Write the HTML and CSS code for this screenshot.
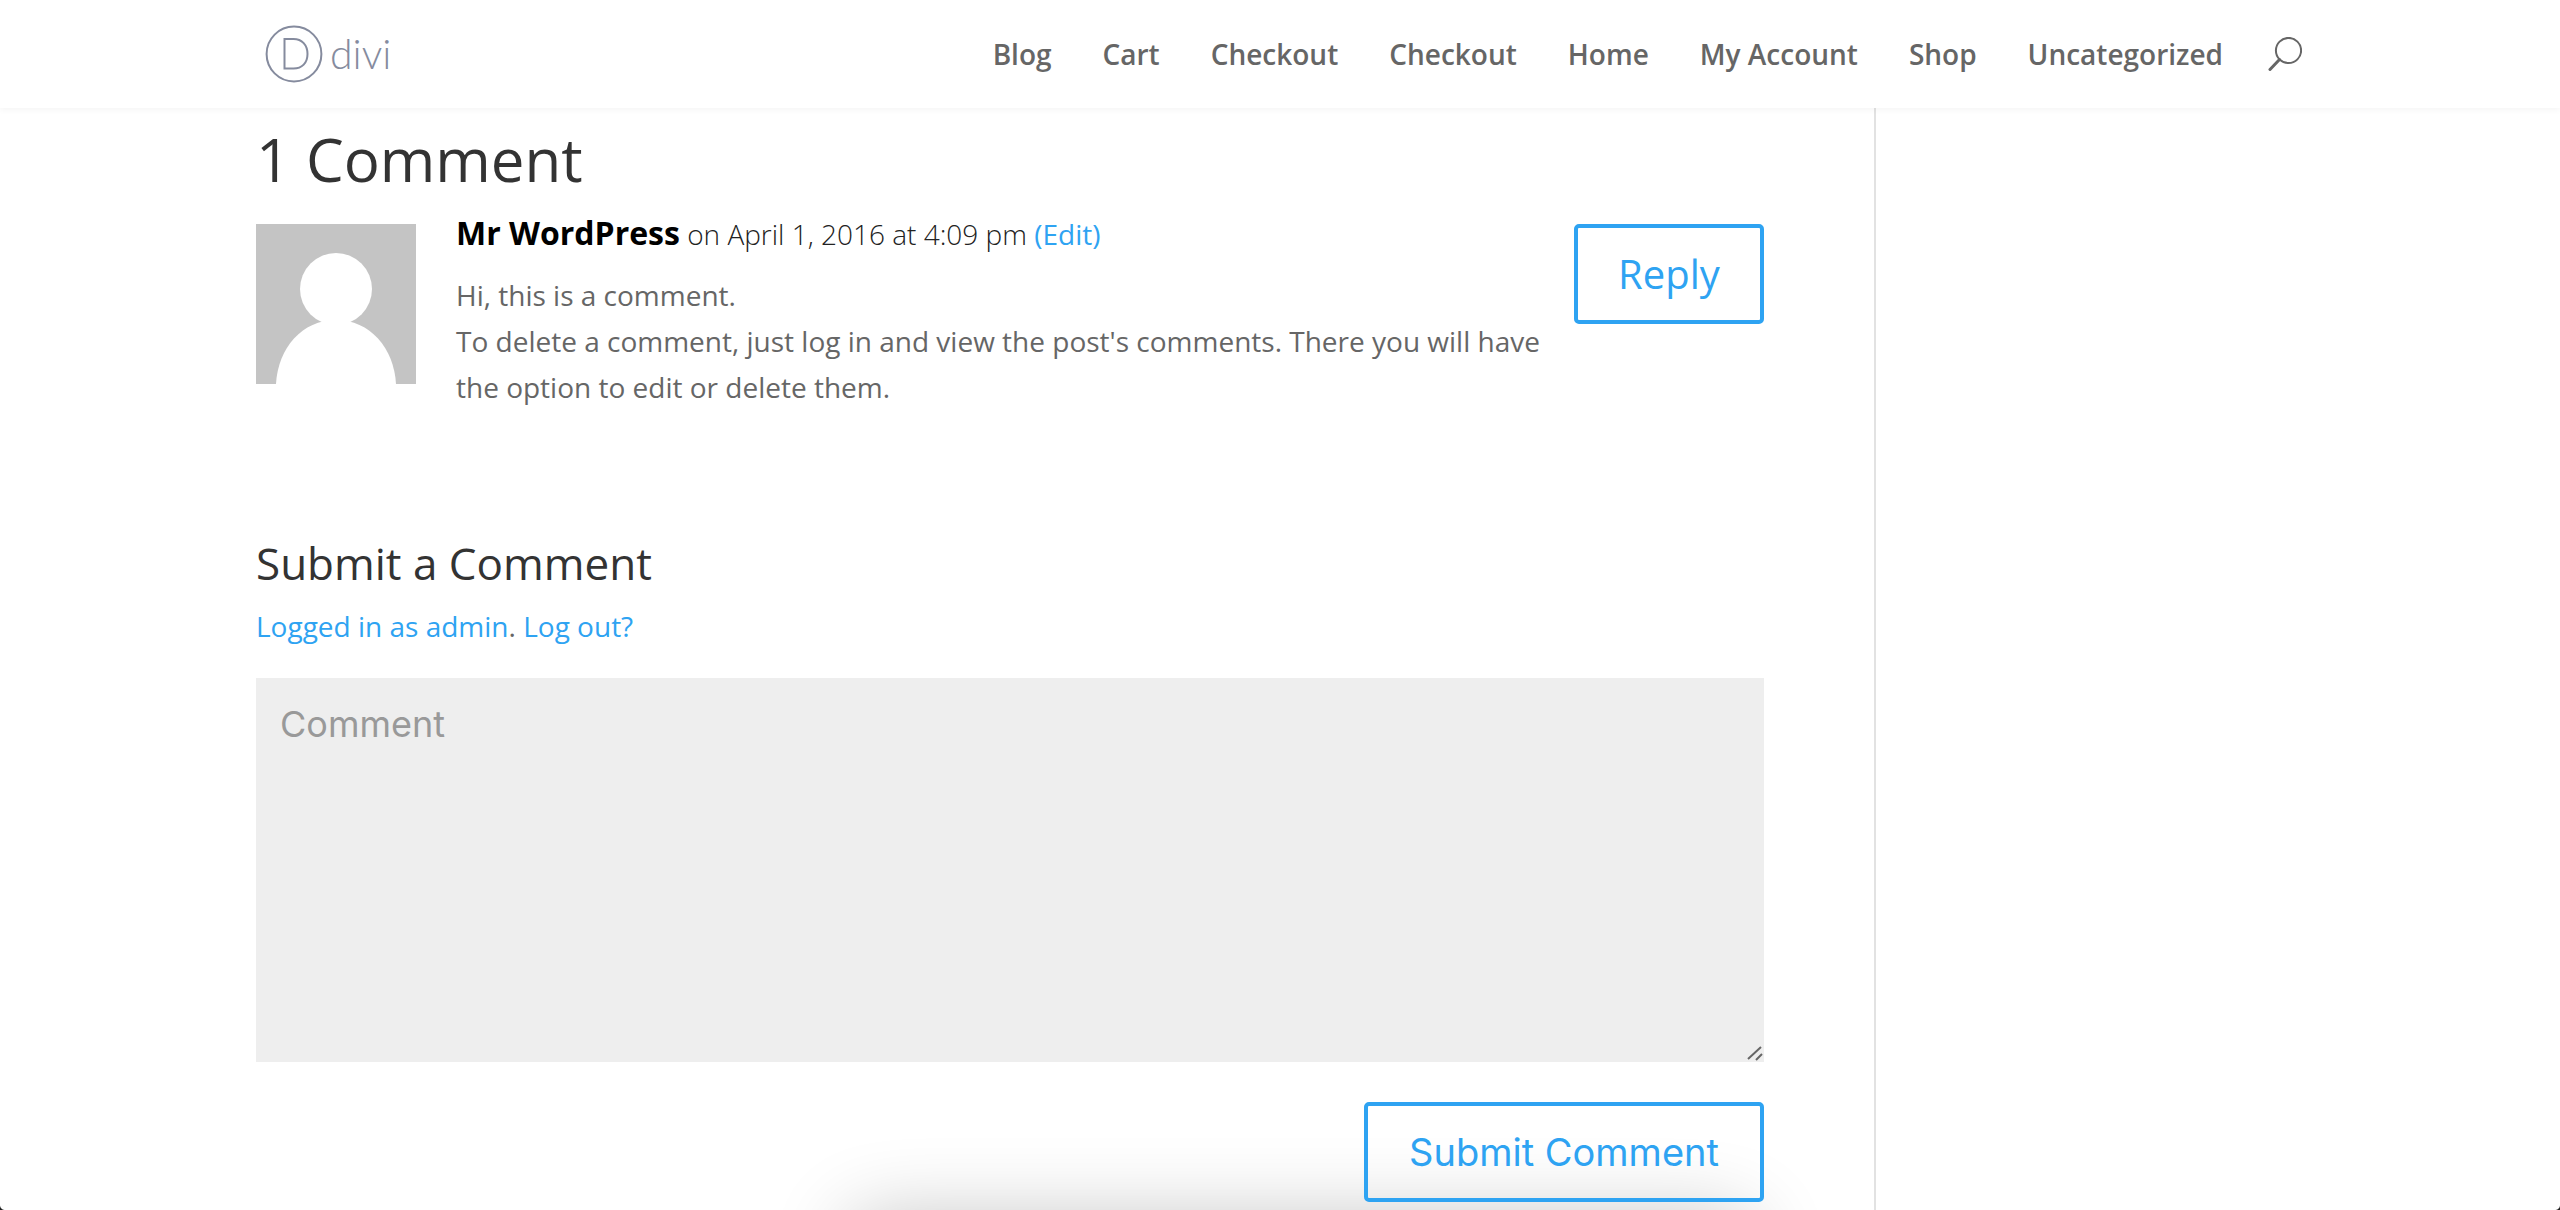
FILE: index.html
```html
<!DOCTYPE html>
<html lang="en">
<head>
<meta charset="utf-8">
<title>Divi</title>
<link rel="stylesheet" href="styles.css">
</head>
<body>
<header class="site-header">
  <a class="logo" href="#">
    <svg class="logo-mark" viewBox="0 0 58 58" width="58" height="58" fill="none" stroke="#858b9e" stroke-width="2">
      <circle cx="29" cy="29" r="27.4"/>
      <path d="M19.5 14h9c8.500 0 14 6 14 15s-5.500 14.500-14 14.500h-9z"/>
    </svg>
    <span class="logo-text">divi</span>
  </a>
  <nav class="nav">
    <a href="#">Blog</a>
    <a href="#">Cart</a>
    <a href="#">Checkout</a>
    <a href="#">Checkout</a>
    <a href="#">Home</a>
    <a href="#">My Account</a>
    <a href="#">Shop</a>
    <a href="#">Uncategorized</a>
  </nav>
  <svg class="search" viewBox="0 0 34 34" width="34" height="34" fill="none" stroke="#666" stroke-width="2">
    <circle cx="20.5" cy="13.5" r="12.6"/>
    <path d="M11.5 22.5L2 32.5" stroke-width="3" stroke-linecap="round"/>
  </svg>
</header>
<div class="page">
  <div class="bottom-shadow"></div>
  <main class="content">
    <h1 class="comments-title">1 Comment</h1>
    <article class="comment">
      <svg class="avatar" viewBox="0 0 160 160" width="160" height="160">
        <rect width="160" height="160" fill="#c4c4c4"/>
        <ellipse cx="80" cy="65" rx="36" ry="36" fill="#fff"/>
        <path d="M20 160C22 124 46 96 80 96s58 28 60 64z" fill="#fff"/>
      </svg>
      <div class="comment-body">
        <p class="comment-meta"><strong class="author">Mr WordPress</strong> on April 1, 2016 at 4:09 pm <a class="edit" href="#">(Edit)</a></p>
        <p class="comment-text">Hi, this is a comment.<br>To delete a comment, just log in and view the post's comments. There you will have the option to edit or delete them.</p>
      </div>
      <a class="btn btn-reply" href="#">Reply</a>
    </article>
    <section class="respond">
      <h3 class="respond-title">Submit a Comment</h3>
      <p class="logged-in"><a href="#">Logged in as admin</a>. <a href="#">Log out?</a></p>
      <div class="input-wrap">
        <textarea class="comment-input" placeholder="Comment"></textarea>
        <svg class="grip" viewBox="0 0 18 18" width="18" height="18" stroke="#666" stroke-width="2" fill="none">
          <path d="M2 15L15 3M10 16l6-6"/>
        </svg>
      </div>
      <div class="submit-row"><button class="btn btn-submit" type="button">Submit Comment</button></div>
    </section>
  </main>
</div>
</body>
</html>
```
FILE: styles.css
```css
* { box-sizing: border-box; }
html, body { margin: 0; height: 1210px; overflow: hidden; background: #fff; }
body { font-family: "Open Sans", sans-serif; color: #666; position: relative; }
body::before, body::after {
  content: "";
  position: absolute;
  bottom: 0;
  width: 5px;
  height: 5px;
  z-index: 3;
}
body::before { left: 0; background: radial-gradient(circle at top right, transparent 4.5px, #222 5.5px); }
body::after { right: 0; background: radial-gradient(circle at top left, transparent 4.5px, #222 5.5px); }
a { color: #2ea3f2; text-decoration: none; }
p, h1, h3 { margin: 0; }

.site-header {
  height: 108px;
  display: flex;
  align-items: center;
  padding: 0 258px 0 265px;
  background: #fff;
  box-shadow: 0 2px 6px rgba(0, 0, 0, .045);
  position: relative;
  z-index: 2;
}
.logo { display: flex; align-items: center; gap: 7px; }
.logo-mark { display: block; }
.logo-text { font-family: "Lato", sans-serif; font-weight: 300; font-size: 41px; line-height: 58px; color: #858b9e; }
.nav { display: flex; gap: 51px; margin-left: auto; }
.nav a { font-size: 28px; font-weight: 600; color: #666; line-height: 40px; }
.search { margin-left: 45px; }

.page { position: relative; height: 1102px; overflow: hidden; }
.bottom-shadow {
  position: absolute;
  left: 850px;
  width: 900px;
  top: 1110px;
  height: 80px;
  box-shadow: 0 0 80px rgba(0, 0, 0, .24);
  border-radius: 20px;
}
.content {
  position: relative;
  width: 1620px;
  height: 1102px;
  margin-left: 256px;
  padding-right: 110px;
  border-right: 2px solid #e2e2e2;
}
.comments-title { font-size: 60px; font-weight: 400; line-height: 82px; color: #333; padding-top: 10px; height: 116px; }
.comment { display: flex; align-items: flex-start; }
.avatar { display: block; flex: none; }
.comment-body { width: 1094px; margin-left: 40px; }
.comment-meta { font-size: 28px; line-height: 36px; color: #222; height: 46px; font-weight: 300; margin-top: -9px; }
.edit { font-weight: 400; }
.author { font-size: 32px; font-weight: 700; color: #000; }
.comment-text { font-size: 28px; line-height: 46px; color: #666; padding-top: 11px; }
.btn {
  display: block;
  border: 4px solid #2ea3f2;
  border-radius: 5px;
  color: #2ea3f2;
  background: transparent;
}
.btn-reply { width: 190px; height: 100px; margin-left: auto; font-size: 40px; line-height: 92px; text-align: center; }

.respond { margin-top: 124px; }
.respond-title { font-size: 44px; font-weight: 400; line-height: 58px; color: #333; }
.logged-in { font-size: 28px; line-height: 40px; margin-top: 14px; color: #666; }
.input-wrap { position: relative; margin-top: 32px; }
.comment-input {
  display: block;
  width: 100%;
  height: 384px;
  margin: 0;
  padding: 24px;
  border: 0;
  border-radius: 0;
  outline: 0;
  resize: none;
  background: #eee;
  font-family: "Inter", sans-serif;
  font-size: 36px;
  color: #999;
}
.comment-input::placeholder { color: #999; opacity: 1; }
.grip { position: absolute; right: 0; bottom: 0; }
.submit-row { display: flex; justify-content: flex-end; margin-top: 40px; }
.btn-submit { width: 400px; height: 100px; font-family: "Inter", sans-serif; font-size: 38px; padding: 0; }
```
